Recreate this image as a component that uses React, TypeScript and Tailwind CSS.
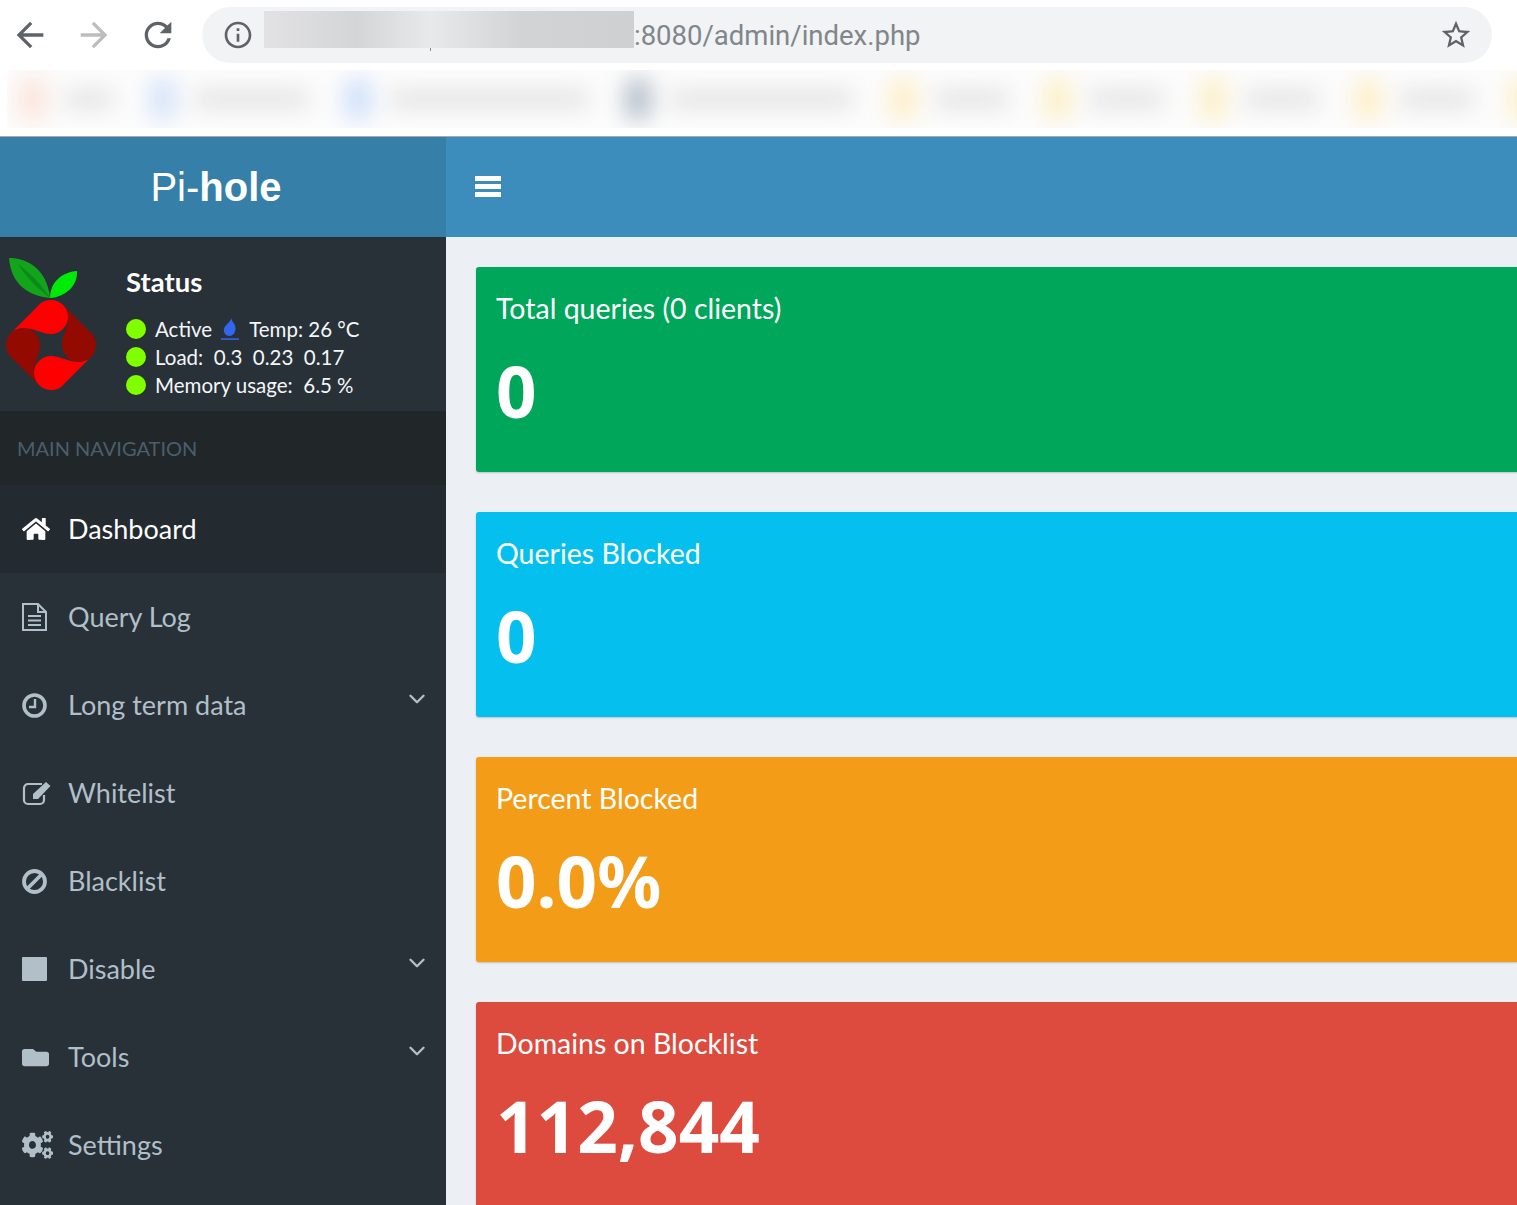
import { ChevronDown } from "lucide-react";
import { FaCogs, FaFolder, FaHome } from "react-icons/fa";

const blob = "M51 300A17 17 0 1 1 51 334C41 334 35 328 23 328C19 328 15 329 11.500 332.500L38 306C41 302 46 300 51 300Z";

function Logo() {
  return (
    <svg viewBox="0 250 100 145" className="h-[145px] w-[100px] shrink-0">
      <path d={blob} fill="#930a00" transform="rotate(-90 51 345)" />
      <path d={blob} fill="#930a00" transform="rotate(90 51 345)" />
      <path d={blob} fill="#ff0000" />
      <path d={blob} fill="#ff0000" transform="rotate(180 51 345)" />
      <path d="M9 258C26 258 47 268 50 298C28 296 11 284 9 258Z" fill="#12a51c" />
      <path d="M18 264C28 272 40 282 50 298C40 290 28 280 18 264Z" fill="#0c8a17" />
      <path d="M50 298C50 282 62 272 77 271C78 285 66 297 50 298Z" fill="#00ea08" />
    </svg>
  );
}

function Flame() {
  return (
    <svg viewBox="0 0 18 22" className="h-[22px] w-[18px]">
      <path d="M10.500 0C10.500 4 14.500 5.500 14.500 10.500C14.500 15 11.500 18 8.500 18C5 18 2.800 15 2.800 12C2.800 7.500 9 5 10.500 0Z" fill="#3366ee" />
      <rect x="0" y="20.300" width="18" height="1.500" fill="#3366ee" />
    </svg>
  );
}

function FileIcon() {
  return (
    <svg viewBox="0 0 25 28" className="h-[28px] w-[25px]" fill="none" stroke="currentColor" strokeWidth="2">
      <path d="M1 1H16L24 9V27H1Z" />
      <path d="M16 1V9H24" />
      <path d="M6 13H19M6 17.500H19M6 22H19" strokeWidth="1.800" />
    </svg>
  );
}

function ClockIcon() {
  return (
    <svg viewBox="0 0 25 25" className="h-[25px] w-[25px]" fill="none" stroke="currentColor">
      <circle cx="12.500" cy="12.500" r="10.500" strokeWidth="3.600" />
      <path d="M13 6V14H7" strokeWidth="2.400" />
    </svg>
  );
}

function EditIcon() {
  return (
    <svg viewBox="0 0 29 25" className="h-[25px] w-[29px]" fill="none">
      <path d="M20 3H6A4 4 0 0 0 2 7V19A4 4 0 0 0 6 23H18A4 4 0 0 0 22 19V14" stroke="currentColor" strokeWidth="2.200" />
      <path d="M24 1L28.500 5L16 18H11V13Z" fill="currentColor" />
    </svg>
  );
}

function BanIcon() {
  return (
    <svg viewBox="0 0 25 25" className="h-[25px] w-[25px]" fill="none" stroke="currentColor" strokeWidth="3.800">
      <circle cx="12.500" cy="12.500" r="10.500" />
      <path d="M6 19L19 6" />
    </svg>
  );
}

// chrome toolbar glyphs
function Glyph({ d, className }: { d: string; className: string }) {
  return (
    <svg viewBox="0 0 24 24" className={className} fill="currentColor">
      <path d={d} />
    </svg>
  );
}

const navItems = [
  { label: "Dashboard", icon: <FaHome className="h-[26px] w-[28px]" />, active: true },
  { label: "Query Log", icon: <FileIcon /> },
  { label: "Long term data", icon: <ClockIcon />, more: true },
  { label: "Whitelist", icon: <EditIcon /> },
  { label: "Blacklist", icon: <BanIcon /> },
  { label: "Disable", icon: <span className="block h-[24px] w-[25px] rounded-[1px] bg-current" />, more: true },
  { label: "Tools", icon: <FaFolder className="h-[23px] w-[27px]" preserveAspectRatio="none" />, more: true },
  { label: "Settings", icon: <FaCogs className="h-[28px] w-[31px]" preserveAspectRatio="none" /> },
];

const cards = [
  { title: "Total queries (0 clients)", value: "0", color: "bg-[#00a65a]" },
  { title: "Queries Blocked", value: "0", color: "bg-[#05bfef]" },
  { title: "Percent Blocked", value: "0.0%", color: "bg-[#f39c18]" },
  { title: "Domains on Blocklist", value: "112,844", color: "bg-[#dd4b3e]" },
];

const bookmarks = [
  { w: "w-[130px]", dot: "bg-[#fbe4da]" },
  { w: "w-[195px]", dot: "bg-[#d6e4fa]" },
  { w: "w-[280px]", dot: "bg-[#d0e0fa]" },
  { w: "w-[265px]", dot: "bg-[#b8c2cc]" },
  { w: "w-[155px]", dot: "bg-[#fdefc8]" },
  { w: "w-[155px]", dot: "bg-[#fdefc8]" },
  { w: "w-[155px]", dot: "bg-[#fdefc8]" },
  { w: "w-[155px]", dot: "bg-[#fdefc8]" },
  { w: "w-[155px]", dot: "bg-[#fdefc8]" },
];

function StatusRow({ children }: { children: React.ReactNode }) {
  return (
    <div className="flex h-[28px] items-center whitespace-nowrap">
      <span className="mr-[9px] h-[20px] w-[20px] shrink-0 rounded-full bg-[#7fff00]" />
      {children}
    </div>
  );
}

export default function App() {
  return (
    <div className="flex h-[1205px] w-[1517px] flex-col overflow-hidden bg-white font-[Lato]">
      {/* browser toolbar */}
      <div className="flex h-[70px] shrink-0 items-start pl-[10px] pr-[25px] pt-[7px]">
        <div className="flex h-[56px] w-[192px] items-center gap-[24px] text-[#5f6368]">
          <Glyph className="h-[40px] w-[40px]" d="M20 11H7.830l5.590-5.590L12 4l-8 8 8 8 1.410-1.410L7.830 13H20v-2z" />
          <Glyph className="h-[40px] w-[40px] text-[#bdbdbd]" d="M12 4l-1.410 1.410L16.170 11H4v2h12.170l-5.580 5.590L12 20l8-8z" />
          <Glyph className="h-[40px] w-[40px]" d="M17.650 6.350A7.958 7.958 0 0 0 12 4c-4.420 0-7.990 3.580-7.990 8s3.570 8 7.990 8c3.730 0 6.840-2.550 7.730-6h-2.080A5.990 5.990 0 0 1 12 18c-3.310 0-6-2.690-6-6s2.690-6 6-6c1.660 0 3.140.690 4.220 1.780L13 11h7V4l-2.350 2.350z" />
        </div>
        <div className="flex h-[56px] flex-1 items-center rounded-full bg-[#f1f3f4] pl-[20px] pr-[19px]">
          <Glyph className="h-[32px] w-[32px] text-[#5f6368]" d="M11 7h2v2h-2zm0 4h2v6h-2zm1-9C6.480 2 2 6.480 2 12s4.480 10 10 10 10-4.480 10-10S17.520 2 12 2zm0 18c-4.410 0-8-3.590-8-8s3.590-8 8-8 8 3.590 8 8-3.590 8-8 8z" />
          <div className="relative mb-[12px] ml-[10px] h-[37px] w-[370px] bg-[linear-gradient(90deg,#e2e2e4_0%,#d4d5d7_25%,#e8e9eb_45%,#d2d3d5_70%,#cfd0d2_100%)]">
            <span className="absolute left-[166px] top-[37px] h-[3px] w-px bg-[#888888]" />
          </div>
          <span className="pt-[2px] font-[Roboto] text-[27.500px] leading-none text-[#80868b]">:8080/admin/index.php</span>
          <Glyph className="ml-auto h-[34px] w-[34px] text-[#5f6368]" d="M22 9.240l-7.190-.620L12 2 9.190 8.630 2 9.240l5.460 4.730L5.820 21 12 17.270 18.180 21l-1.630-7.030L22 9.240zM12 15.400l-3.760 2.270 1-4.280-3.320-2.880 4.380-.380L12 6.100l1.710 4.040 4.380.380-3.320 2.880 1 4.280L12 15.400z" />
        </div>
      </div>
      {/* bookmarks, blurred out */}
      <div className="ml-[7px] flex h-[58px] shrink-0 items-center overflow-hidden bg-[#fcfcfc]">
        {bookmarks.map((b, i) => (
          <div key={i} className={`flex ${b.w} shrink-0 items-center gap-[18px] pl-[12px] blur-[11px]`}>
            <span className={`h-[44px] w-[28px] shrink-0 rounded-full ${b.dot}`} />
            <span className="mr-[24px] h-[18px] flex-1 rounded bg-[#e2e2e2]" />
          </div>
        ))}
      </div>
      <div className="mt-[8px] h-px shrink-0 bg-[#a9a9a9]" />

      {/* page */}
      <div className="grid min-h-0 flex-1 grid-cols-[446px_1fr] grid-rows-[100px_1fr]">
        <div className="flex items-center justify-center bg-[#367fa9] pr-[14px] font-[Liberation_Sans] text-[40px] text-white">
          <span className="font-normal">Pi-</span>
          <span className="font-bold">hole</span>
        </div>
        <div className="flex items-center bg-[#3c8dbc] pl-[29px]">
          <div className="flex w-[26px] flex-col gap-[3px] pb-[1px]">
            <span className="h-[5px] bg-white" />
            <span className="h-[5px] bg-white" />
            <span className="h-[5px] bg-white" />
          </div>
        </div>

        {/* sidebar */}
        <aside className="flex min-h-0 flex-col bg-[#283138]">
          <div className="flex h-[174px] shrink-0 pt-[13px]">
            <Logo />
            <div className="ml-[26px] text-[20.500px] text-[#f4f6f8]">
              <div className="mt-[15px] text-[27.500px] font-bold leading-[34px] text-white">Status</div>
              <div className="mt-[16px]">
                <StatusRow>
                  Active
                  <span className="ml-[9px] mr-[10px]"><Flame /></span>
                  Temp: 26 °C
                </StatusRow>
                <StatusRow>Load:&nbsp; 0.3&nbsp; 0.23&nbsp; 0.17</StatusRow>
                <StatusRow>Memory usage:&nbsp; 6.5 %</StatusRow>
              </div>
            </div>
          </div>
          <div className="flex h-[74px] shrink-0 items-center bg-[#212628] pl-[17px] text-[20px] text-[#4a5f6d]">
            MAIN NAVIGATION
          </div>
          {navItems.map((item) => (
            <div
              key={item.label}
              className={`relative flex h-[88px] shrink-0 items-center text-[27px] ${item.active ? "bg-[#232b30] text-white" : "text-[#b1bfc8]"}`}
            >
              <span className="flex w-[68px] shrink-0 items-center pl-[22px]">{item.icon}</span>
              {item.label}
              {item.more && <ChevronDown className="absolute right-[16px] top-[25px] h-[26px] w-[26px]" strokeWidth={2.2} />}
            </div>
          ))}
        </aside>

        {/* stat cards */}
        <main className="flex min-h-0 flex-col gap-[40px] overflow-hidden bg-[#ecf0f5] pl-[30px] pt-[30px]">
          {cards.map((c) => (
            <div key={c.title} className={`h-[205px] shrink-0 rounded-l-[3px] ${c.color} pl-[20px] pt-[21px] text-white shadow-[0_1px_2px_rgba(0,0,0,0.2)]`}>
              <div className="text-[28.500px] leading-[40px]">{c.title}</div>
              <div className="mt-[18px] font-[Noto_Sans] text-[71px] font-bold leading-[90px]">{c.value}</div>
            </div>
          ))}
        </main>
      </div>
    </div>
  );
}
